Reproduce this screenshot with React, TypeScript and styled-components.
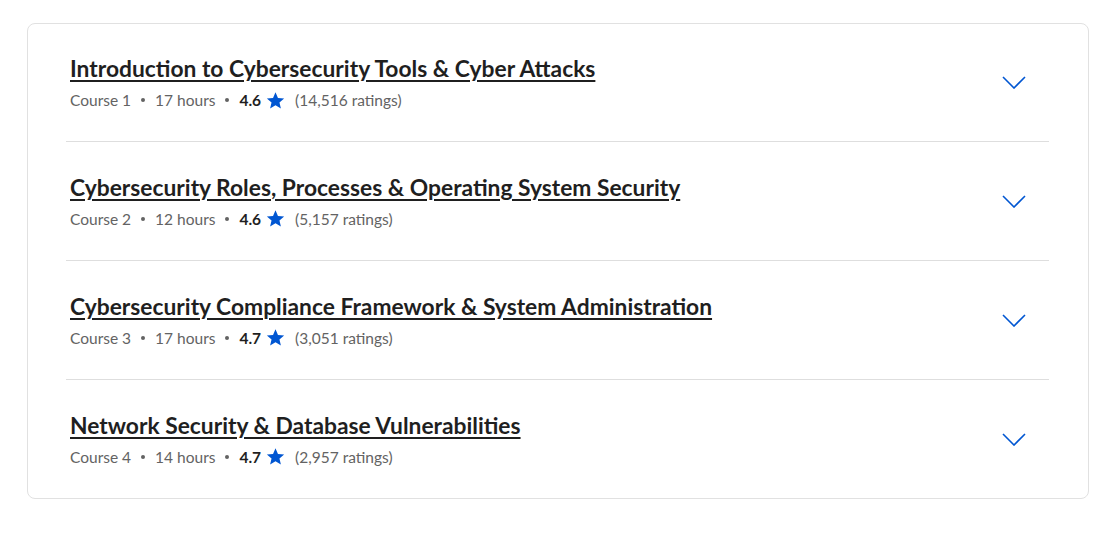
import React from "react";
import styled, { createGlobalStyle } from "styled-components";

const GlobalStyle = createGlobalStyle`
  html, body { margin: 0; padding: 0; background: #ffffff; }
  body { font-family: Lato, "Open Sans", sans-serif; }
`;

const Page = styled.div`
  padding: 23px 20px 36px 27px;
`;

const Card = styled.section`
  box-sizing: border-box;
  width: 1062px;
  border: 1px solid #e1e1e1;
  border-radius: 8px;
  padding: 0 39px 0 38px;
`;

const Row = styled.div<{ $height: number; $last?: boolean }>`
  display: flex;
  align-items: center;
  justify-content: space-between;
  height: ${(p) => p.$height}px;
  box-sizing: border-box;
  padding: 0 23px 0 4px;
  border-bottom: ${(p) => (p.$last ? "none" : "1px solid #dedede")};
`;

const Info = styled.div`
  display: flex;
  flex-direction: column;
  gap: 7px;
`;

const Title = styled.a`
  font-family: Lato, sans-serif;
  font-weight: 700;
  font-size: 22.8px;
  line-height: 28px;
  color: #1f1f1f;
  text-decoration: underline;
  text-decoration-thickness: 2px;
  text-underline-offset: 3px;
  cursor: pointer;
`;

const Meta = styled.div`
  display: flex;
  align-items: center;
  font-family: Lato, sans-serif;
  font-size: 15.5px;
  line-height: 22px;
  color: #636363;
`;

const Dot = styled.span`
  display: inline-block;
  width: 4px;
  height: 4px;
  border-radius: 50%;
  background: #636363;
  margin: 0 10px;
`;

const Rating = styled.span`
  font-weight: 700;
  color: #1f1f1f;
`;

const Star = styled.svg`
  width: 19px;
  height: 19px;
  margin: 0 10px 0 5px;
  fill: #0056d2;
`;

const Chevron = styled.svg`
  width: 24px;
  height: 13px;
  flex-shrink: 0;
`;

type Course = { title: string; num: number; hours: number; rating: string; count: string };

const courses: Course[] = [
  { title: "Introduction to Cybersecurity Tools & Cyber Attacks", num: 1, hours: 17, rating: "4.6", count: "14,516" },
  { title: "Cybersecurity Roles, Processes & Operating System Security", num: 2, hours: 12, rating: "4.6", count: "5,157" },
  { title: "Cybersecurity Compliance Framework & System Administration", num: 3, hours: 17, rating: "4.7", count: "3,051" },
  { title: "Network Security & Database Vulnerabilities", num: 4, hours: 14, rating: "4.7", count: "2,957" },
];

export default function App() {
  return (
    <>
      <GlobalStyle />
      <Page>
        <Card>
          {courses.map((c, i) => {
            const last = i === courses.length - 1;
            const height = i === 0 || last ? 118 : 119;
            return (
              <Row key={c.num} $height={height} $last={last}>
                <Info>
                  <div>
                    <Title>{c.title}</Title>
                  </div>
                  <Meta>
                    <span>Course {c.num}</span>
                    <Dot />
                    <span>{c.hours} hours</span>
                    <Dot />
                    <Rating>{c.rating}</Rating>
                    <Star viewBox="0 0 24 24">
                      <path d="M12 1.5l3.1 7.2 7.8.7-5.9 5.1 1.8 7.6L12 18.1l-6.8 4 1.8-7.6-5.9-5.1 7.8-.7z" />
                    </Star>
                    <span>({c.count} ratings)</span>
                  </Meta>
                </Info>
                <Chevron viewBox="0 0 24 13">
                  <path d="M1 1l11 11L23 1" fill="none" stroke="#0056d2" strokeWidth="1.6" />
                </Chevron>
              </Row>
            );
          })}
        </Card>
      </Page>
    </>
  );
}
